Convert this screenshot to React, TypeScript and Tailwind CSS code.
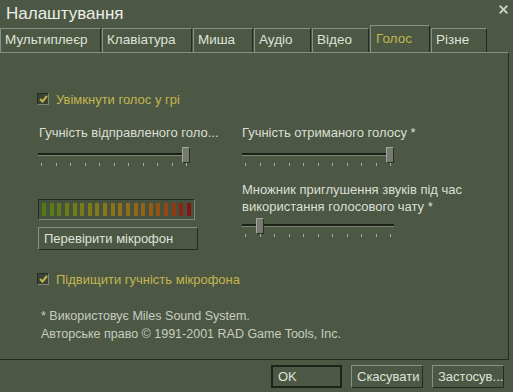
import { X } from "lucide-react";

const font = { fontFamily: '"Liberation Sans", Tahoma, Arial, sans-serif' };

const tabs = [
    { label: "Мультиплеєр", w: "w-[101px]" },
    { label: "Клавіатура", w: "w-[90px]" },
    { label: "Миша", w: "w-[60px]" },
    { label: "Аудіо", w: "w-[57px]" },
    { label: "Відео", w: "w-[57px]" },
    { label: "Голос", w: "w-[60px]", active: true },
    { label: "Різне", w: "w-[56px]" },
];

const meterColors = [
    "#557a14", "#5b7b15", "#627b15", "#6a7c16", "#717c16",
    "#787b17", "#7e7a17", "#837918", "#887718", "#8b7418",
    "#8e7118", "#906d17", "#926816", "#946215", "#955b14",
    "#955213", "#944712", "#903812", "#8c2611", "#891410",
];

function Checkbox({ label }: { label: string }) {
    return (
        <div className="flex items-center gap-[7px] h-[14px]">
            <div className="w-[12px] h-[12px] bg-[#3a4234] border-t border-l border-[#262b21] border-b border-r border-b-[#7f8777] border-r-[#7f8777] flex items-center justify-center">
                <svg width="9" height="8" viewBox="0 0 9 8">
                    <path d="M1 4 L3.5 6.5 L8 1" stroke="#c4b550" strokeWidth="2" fill="none" />
                </svg>
            </div>
            <span className="text-[13px] text-[#c4b550] leading-none">{label}</span>
        </div>
    );
}

function Slider({ value }: { value: number }) {
    // thumb centre runs from 4px to 148px along a 152px track
    const centre = 4 + value * 144;
    return (
        <div className="relative w-[152px] h-[20px]">
            <div className="absolute left-0 right-0 top-[6px] h-[3px] bg-[#1c2017] border-b border-[#7d8574]" />
            <div
                className="absolute top-0 w-[8px] h-[16px] bg-[#777a71] border-t border-l border-[#a4a89c] border-b border-r border-b-[#2a2e25] border-r-[#2a2e25]"
                style={{ left: centre - 4 }}
            />
            <div className="absolute left-[3px] right-[3px] top-[16px] flex justify-between">
                {Array.from({ length: 11 }).map((_, i) => (
                    <div key={i} className="w-px h-[3px] bg-[#a9ae9f]" />
                ))}
            </div>
        </div>
    );
}

function Button({ label, w, focus }: { label: string; w: string; focus?: boolean }) {
    return (
        <div
            className={`${w} h-[23px] flex items-center px-[5px] text-[13px] text-[#dfe2d8] bg-[#4c5844] ${
                focus
                    ? "border-2 border-[#1e221a]"
                    : "border border-t-[#8a9182] border-l-[#8a9182] border-b-[#262b21] border-r-[#262b21]"
            }`}
        >
            {label}
        </div>
    );
}

export default function App() {
    return (
        <div className="w-[513px] h-[392px] bg-[#4c5844] flex flex-col overflow-hidden select-none" style={font}>
            {/* Title bar */}
            <div className="h-[26px] flex items-center justify-between pl-[6px] pr-[3px]">
                <span className="text-[17px] text-[#eceee7] leading-none">Налаштування</span>
                <X size={13} strokeWidth={3.5} className="text-[#c9ccc2] -mt-[8px]" />
            </div>

            {/* Tabs */}
            <div className="h-[26px] flex items-end gap-px">
                {tabs.map(t => (
                    <div
                        key={t.label}
                        className={`${t.w} ${t.active ? "h-[27px] text-[#c4b550] pl-[5px]" : "h-[24px] text-[#dfe2d8] pl-[4px]"} flex items-center text-[13.5px] border-t border-l border-[#8a9182] border-r border-r-[#262b21]`}
                    >
                        {t.label}
                    </div>
                ))}
            </div>

            {/* Panel */}
            <div className="h-[308px] w-[509px] border-t border-[#8a9182] border-r border-b border-r-[#262b21] border-b-[#262b21] pl-[37px] pt-[39px] flex flex-col">
                <Checkbox label="Увімкнути голос у грі" />

                <div className="flex mt-[19px]">
                    {/* Left column */}
                    <div className="w-[160px] flex flex-col">
                        <div className="text-[13px] text-[#dcdfd5] leading-[16px] ml-[2px] whitespace-nowrap">Гучність відправленого голо...</div>
                        <div className="mt-[6px] ml-px">
                            <Slider value={1} />
                        </div>
                        <div className="mt-[32px] ml-px w-[157px] h-[21px] border border-t-[#262b21] border-l-[#262b21] border-b-[#7f8777] border-r-[#7f8777] bg-[#46513f] flex items-center justify-between px-[3px]">
                            {meterColors.map(c => (
                                <div key={c} className="w-[4px] h-[13px]" style={{ background: c }} />
                            ))}
                        </div>
                        <div className="mt-[7px] ml-px">
                            <Button label="Перевірити мікрофон" w="w-[160px]" />
                        </div>
                    </div>

                    {/* Right column */}
                    <div className="ml-[45px] w-[230px] flex flex-col">
                        <div className="text-[13px] text-[#dcdfd5] leading-[16px] whitespace-nowrap">Гучність отриманого голосу *</div>
                        <div className="mt-[6px]">
                            <Slider value={1} />
                        </div>
                        <div className="mt-[14px] text-[13px] text-[#dcdfd5] leading-[17px]">
                            Множник приглушення звуків під час<br />використання голосового чату *
                        </div>
                        <div className="mt-[3px]">
                            <Slider value={0.1} />
                        </div>
                    </div>
                </div>

                <div className="mt-[22px]">
                    <Checkbox label="Підвищити гучність мікрофона" />
                </div>

                <div className="mt-[21px] ml-[4px] text-[12.5px] text-[#c8ccc0] leading-[18px]">
                    <div>* Використовує Miles Sound System.</div>
                    <div>Авторське право © 1991-2001 RAD Game Tools, Inc.</div>
                </div>
            </div>

            {/* Bottom buttons */}
            <div className="flex justify-end gap-[9px] pr-[9px] mt-[5px]">
                <Button label="OK" w="w-[71px]" focus />
                <Button label="Скасувати" w="w-[72px]" />
                <Button label="Застосув..." w="w-[72px]" />
            </div>
        </div>
    );
}
